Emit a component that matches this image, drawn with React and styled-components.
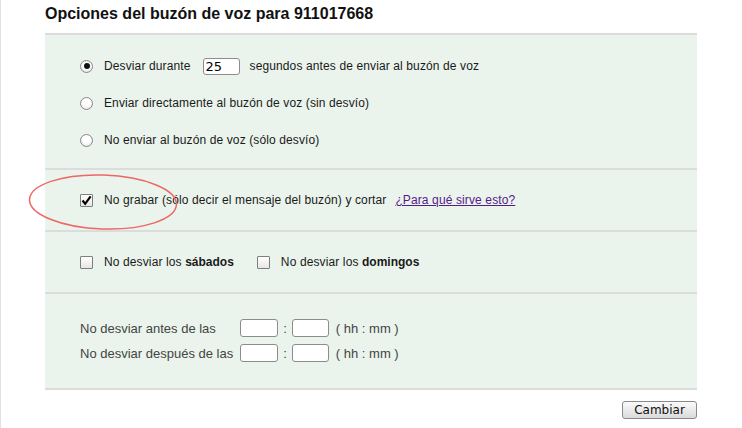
import React from 'react'
import styled, { createGlobalStyle } from 'styled-components'

const GlobalStyle = createGlobalStyle`
  html, body {
    margin: 0;
    padding: 0;
    background: #ffffff;
  }
  body {
    font-family: "Liberation Sans", Arial, sans-serif;
    font-size: 12px;
    color: #1a1a1a;
  }
`

const Page = styled.div`
  position: relative;
  min-height: 100vh;
  box-sizing: border-box;
  border-left: 1px solid #e2e2e2;
  padding-left: 44px;
`

const Title = styled.h1`
  margin: 0;
  padding-top: 2px;
  font-size: 16px;
  line-height: 24px;
  font-weight: bold;
  color: #111;
`

const Panel = styled.div`
  width: 652px;
  margin-top: 7px;
  background: #eaf4ec;
  border-bottom: 2px solid #dcdcdc;
`

const Section = styled.div`
  border-top: 2px solid #dcdcdc;
  padding: ${(p) => p.$pad || '20px 0 20px 35px'};
  display: flex;
  flex-direction: column;
  gap: ${(p) => p.$gap || '0px'};
  letter-spacing: 0.12px;

  b {
    letter-spacing: 0;
  }
`

const Row = styled.div`
  display: flex;
  align-items: center;
  height: 20px;
  white-space: nowrap;
`

const RadioMark = styled.span`
  box-sizing: border-box;
  width: 13px;
  height: 13px;
  flex: none;
  border-radius: 50%;
  border: 1px solid #8a8a8a;
  background: radial-gradient(circle at 50% 40%, #ffffff 40%, #d8d8d8 100%);
  margin-right: 11px;
  display: flex;
  align-items: center;
  justify-content: center;

  &::after {
    content: '';
    display: ${(p) => (p.$checked ? 'block' : 'none')};
    width: 6px;
    height: 6px;
    border-radius: 50%;
    background: #111;
  }
`

const CheckMark = styled.span`
  box-sizing: border-box;
  width: 13px;
  height: 13px;
  flex: none;
  border: 1px solid #7f7f7f;
  border-radius: 1px;
  background: linear-gradient(#ffffff, #e6e6e6);
  margin-left: ${(p) => p.$offset || '0px'};
  margin-right: 11px;
  display: flex;
  align-items: center;
  justify-content: center;
`

const SecondsInput = styled.span`
  box-sizing: border-box;
  width: 37px;
  height: 17px;
  margin: 0 10px 0 12px;
  padding-left: 2px;
  border: 1px solid #8c8c8c;
  border-radius: 3px;
  background: #fff;
  font-family: "DejaVu Sans", Verdana, sans-serif;
  font-size: 13px;
  line-height: 15px;
  letter-spacing: 0;
  color: #000;
`

const HelpLink = styled.a`
  margin-left: 9px;
  color: #551a8b;
  text-decoration: underline;
`

const TimeGrid = styled.div`
  display: grid;
  grid-template-columns: auto 38px auto 37px auto;
  grid-auto-rows: 18px;
  row-gap: 7px;
  column-gap: 5px;
  align-items: center;
  font-size: 13px;
  letter-spacing: 0;
  color: #444;
  justify-content: start;
`

const TimeLabel = styled.span`
  margin-right: 2px;
  white-space: nowrap;
`

const Units = styled.span`
  margin-left: 2px;
  white-space: nowrap;
`

const TimeBox = styled.span`
  box-sizing: border-box;
  height: 18px;
  border: 1px solid #8c8c8c;
  border-radius: 3px;
  background: #fff;
`

const Footer = styled.div`
  width: 652px;
  display: flex;
  justify-content: flex-end;
  margin-top: 11px;
`

const Button = styled.button`
  box-sizing: border-box;
  width: 75px;
  height: 18px;
  padding: 0;
  border: 1px solid #8a8a8a;
  border-radius: 3px;
  background: linear-gradient(#fbfbfb, #dadada);
  font-family: "DejaVu Sans", Verdana, sans-serif;
  font-size: 12px;
  line-height: 16px;
  color: #111;
`

const Annotation = styled.svg`
  position: absolute;
  left: 24px;
  top: 170px;
  pointer-events: none;
`

function Radio({ checked }) {
  return <RadioMark $checked={checked} />
}

function Check({ checked, offset }) {
  return (
    <CheckMark $offset={offset}>
      {checked && (
        <svg width="11" height="11" viewBox="0 0 11 11">
          <path d="M1.5 5.5 L4.2 8.8 L9.6 1.4" fill="none" stroke="#000" strokeWidth="2.2" />
        </svg>
      )}
    </CheckMark>
  )
}

export default function App() {
  return (
    <>
      <GlobalStyle />
      <Page>
        <Title>Opciones del buzón de voz para 911017668</Title>
        <Panel>
          <Section $pad="21px 0 18px 35px" $gap="17px">
            <Row>
              <Radio checked />
              Desviar durante
              <SecondsInput>25</SecondsInput>
              segundos antes de enviar al buzón de voz
            </Row>
            <Row>
              <Radio />
              Enviar directamente al buzón de voz (sin desvío)
            </Row>
            <Row>
              <Radio />
              No enviar al buzón de voz (sólo desvío)
            </Row>
          </Section>
          <Section>
            <Row>
              <Check checked />
              No grabar (sólo decir el mensaje del buzón) y cortar
              <HelpLink href="#">¿Para qué sirve esto?</HelpLink>
            </Row>
          </Section>
          <Section>
            <Row>
              <Check />
              <span>
                No desviar los <b>sábados</b>
              </span>
              <Check offset="23px" />
              <span>
                No desviar los <b>domingos</b>
              </span>
            </Row>
          </Section>
          <Section $pad="25px 0 26px 35px">
            <TimeGrid>
              <TimeLabel>No desviar antes de las</TimeLabel>
              <TimeBox />
              <span>:</span>
              <TimeBox />
              <Units>( hh : mm )</Units>
              <TimeLabel>No desviar después de las</TimeLabel>
              <TimeBox />
              <span>:</span>
              <TimeBox />
              <Units>( hh : mm )</Units>
            </TimeGrid>
          </Section>
        </Panel>
        <Footer>
          <Button>Cambiar</Button>
        </Footer>
        <Annotation width="156" height="64" viewBox="0 0 156 64">
          <ellipse
            cx="78"
            cy="32"
            rx="73.5"
            ry="27"
            transform="rotate(2 78 32)"
            fill="none"
            stroke="#ee6666"
            strokeWidth="1.5"
          />
        </Annotation>
      </Page>
    </>
  )
}
